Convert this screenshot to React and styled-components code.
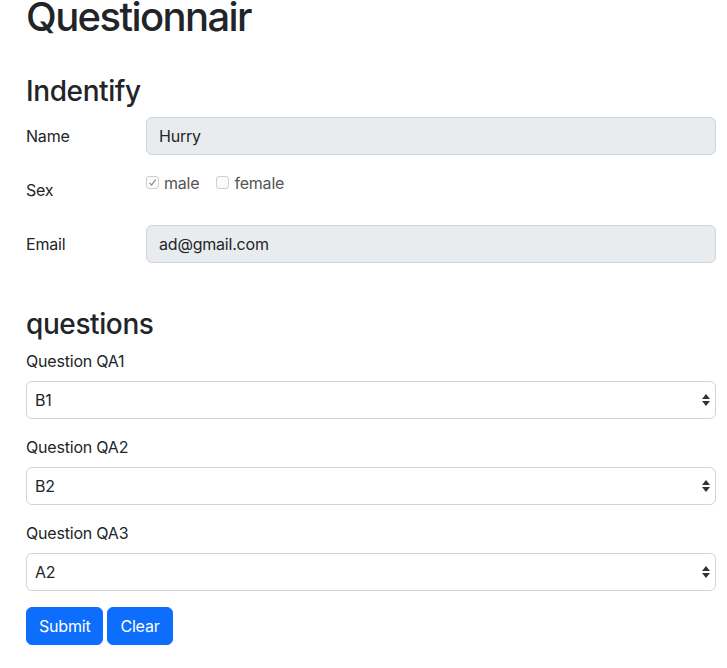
import React from 'react';
import styled, { createGlobalStyle } from 'styled-components';

const GlobalStyle = createGlobalStyle`
body {
    margin: 0;
    background: #fff;
    color: #212529;
    font-family: Inter, "Noto Sans", sans-serif;
    font-size: 16px;
    line-height: 24px;
}
* {
    box-sizing: border-box;
}
`

const Page = styled.div`
padding: 0 11px 0 26px;
`

const Title = styled.h1`
margin: 0 0 41px;
font-size: 40px;
font-weight: 500;
line-height: 34px;
letter-spacing: -1.6px;
`

const SectionTitle = styled.h2`
margin: ${props => props.top || 0}px 0 8px;
font-size: 28px;
font-weight: 500;
line-height: 1.2;
letter-spacing: -0.4px;
`

const FormRow = styled.div`
display: flex;
margin-bottom: 16px;
`

const RowLabel = styled.label`
width: 120px;
flex-shrink: 0;
padding: 7px 0;
line-height: 24px;
letter-spacing: -0.2px;
`

const TextInput = styled.input`
flex: 1;
height: 38px;
padding: 6px 12px;
border: 1px solid #ced4da;
border-radius: 6px;
background: #e9ecef;
color: #212529;
font-family: inherit;
font-size: 16px;
letter-spacing: -0.2px;
outline: none;
`

const CheckGroup = styled.div`
display: flex;
align-items: center;
height: 24px;
gap: 17px;
`

const CheckItem = styled.label`
display: flex;
align-items: center;
gap: 5px;
color: #555;
letter-spacing: -0.2px;
`

const CheckBox = styled.span`
display: flex;
align-items: center;
justify-content: center;
width: 13px;
height: 13px;
border: 1px solid #cfcfcf;
border-radius: 3px;
background: #fbfbfb;
`

const Group = styled.div`
margin-bottom: 16px;
`

const GroupLabel = styled.label`
display: block;
margin-bottom: 8px;
line-height: 24px;
letter-spacing: -0.2px;
`

const SelectBox = styled.div`
display: flex;
align-items: center;
justify-content: space-between;
height: 38px;
padding: 0 4px 0 8px;
border: 1px solid #ced4da;
border-radius: 6px;
background: #fff;
letter-spacing: -0.2px;
`

const Buttons = styled.div`
display: flex;
gap: 4px;
`

const Button = styled.button`
height: 38px;
padding: 6px 12px;
border: 1px solid #0d6efd;
border-radius: 6px;
background: #0d6efd;
color: #fff;
font-family: inherit;
font-size: 16px;
letter-spacing: -0.2px;
line-height: 24px;
`

const Check = ({ checked, label }) => (
    <CheckItem>
        <CheckBox>
            {checked && (
                <svg width="9" height="9" viewBox="0 0 9 9">
                    <path d="M1.5 4.8 L3.6 7 L7.6 1.6" fill="none" stroke="#8a8a8a" strokeWidth="1.2" />
                </svg>
            )}
        </CheckBox>
        {label}
    </CheckItem>
)

const Arrows = () => (
    <svg width="10" height="16" viewBox="0 0 10 16">
        <polygon points="1,7 5,2 9,7" fill="#333" />
        <polygon points="1,9 5,14 9,9" fill="#333" />
    </svg>
)

const Question = ({ label, value }) => (
    <Group>
        <GroupLabel>{label}</GroupLabel>
        <SelectBox>
            <span>{value}</span>
            <Arrows />
        </SelectBox>
    </Group>
)

const App = () => {
    return (
        <Page>
            <GlobalStyle />
            <Title>Questionnair</Title>
            <SectionTitle>Indentify</SectionTitle>
            <FormRow>
                <RowLabel>Name</RowLabel>
                <TextInput value="Hurry" readOnly />
            </FormRow>
            <FormRow>
                <RowLabel>Sex</RowLabel>
                <CheckGroup>
                    <Check checked label="male" />
                    <Check label="female" />
                </CheckGroup>
            </FormRow>
            <FormRow>
                <RowLabel>Email</RowLabel>
                <TextInput value="ad@gmail.com" readOnly />
            </FormRow>
            <SectionTitle top={45}>questions</SectionTitle>
            <Question label="Question QA1" value="B1" />
            <Question label="Question QA2" value="B2" />
            <Question label="Question QA3" value="A2" />
            <Buttons>
                <Button>Submit</Button>
                <Button>Clear</Button>
            </Buttons>
        </Page>
    )
}

export default App
